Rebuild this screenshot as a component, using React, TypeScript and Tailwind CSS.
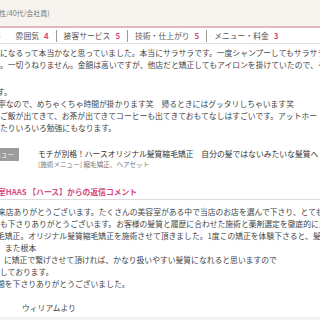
type RatingProps = {
  label: string;
  score: number;
};

function Rating({ label, score }: RatingProps) {
  return (
    <div className="flex items-center gap-[5px]">
      <span>{label}</span>
      <span className="font-bold text-[#d9457c]">{score}</span>
    </div>
  );
}

function Sep() {
  return <span className="block w-px h-[12px] bg-[#9a9a9a] mx-[7px]" />;
}

const review1 = [
  "になるって本当かなと思っていました。本当にサラサラです。一度シャンプーしてもサラサラ",
  "。一切うねりません。金額は高いですが、他店だと矯正してもアイロンを掛けていたので、そ",
];

const review2 = [
  { t: "す。", ml: "-ml-[3px]" },
  { t: "寧なので、めちゃくちゃ時間が掛かります笑　帰るときにはグッタリしちゃいます笑", ml: "-ml-[2px]" },
  { t: "ご飯が出てきて、お茶が出てきてコーヒーも出てきておもてなしはすごいです。アットホー", ml: "" },
  { t: "たりいろいろ勉強にもなります。", ml: "" },
];

const reply = [
  { t: "来店ありがとうございます。たくさんの美容室がある中で当店のお店を選んで下さり、とても", ml: "-ml-[2px]" },
  { t: "も下さりありがとうございます。お客様の髪質と履歴に合わせた施術と薬剤選定を徹底的に見", ml: "" },
  { t: "毛矯正。オリジナル髪質縮毛矯正を施術させて頂きました。1度この矯正を体験下さると、髪", ml: "-ml-[3px]" },
  { t: "また根本", ml: "ml-[5px]" },
  { t: "に矯正で繋げさせて頂ければ、かなり扱いやすい髪質になれると思いますので", ml: "ml-[4px]" },
  { t: "しております。", ml: "" },
  { t: "間を下さりありがとうございました。", ml: "-ml-[3px]" },
];

export default function App() {
  return (
    <div className="w-[320px] h-[320px] overflow-hidden bg-white text-[#444] font-['Noto_Sans_CJK_JP',sans-serif]">
      <div className="h-[26px] bg-[#f7f4ef] flex items-center text-[7px] text-[#777] whitespace-nowrap">
        <span className="-ml-[1px]">性/40代/会社員)</span>
      </div>
      <div className="h-[2px] bg-[#e5b6bf]" />

      <div className="h-[15px] flex items-center text-[7.8px] text-[#555] whitespace-nowrap">
        <span className="-ml-[4px] mr-[15px] font-bold text-[#d9457c]">5</span>
        <Rating label="雰囲気" score={4} />
        <Sep />
        <Rating label="接客サービス" score={5} />
        <Sep />
        <Rating label="技術・仕上がり" score={5} />
        <Sep />
        <Rating label="メニュー・料金" score={3} />
      </div>
      <div className="h-px bg-[#e2e2e2]" />

      <div className="pt-[3px] text-[7.8px] leading-[12px] whitespace-nowrap">
        {review1.map((line) => (
          <div key={line}>{line}</div>
        ))}
        <div className="mt-[15px]">
          {review2.map((line) => (
            <div key={line.t} className={line.ml}>
              {line.t}
            </div>
          ))}
        </div>
      </div>

      <div className="mt-[14px] flex items-start whitespace-nowrap">
        <div className="w-[19px] h-[13px] bg-[#9c9c9c] text-white text-[6.5px] flex items-center justify-end pr-[5px] overflow-hidden">
          <span>メニュー</span>
        </div>
        <div className="ml-[19px]">
          <div className="text-[7.8px] leading-[11px] text-[#333]">
            モチが別格！ハースオリジナル髪質縮毛矯正　自分の髪ではないみたいな髪質へ
          </div>
          <div className="text-[6.6px] leading-[10px] text-[#777]">
            [施術メニュー] 縮毛矯正、ヘアセット
          </div>
        </div>
      </div>

      <div className="mt-[17px] h-[13px] text-[7.8px] leading-[12px] font-bold text-[#d6487e] whitespace-nowrap">
        <span className="-ml-[2px]">室HAAS 【ハース】からの返信コメント</span>
      </div>
      <div className="h-px bg-[#dcdcdc]" />

      <div className="pt-[6px] text-[7.8px] leading-[12px] whitespace-nowrap">
        {reply.map((line) => (
          <div key={line.t} className={line.ml}>
            {line.t}
          </div>
        ))}
        <div className="mt-[12px] ml-[22px]">ウィリアムより</div>
      </div>
      <div className="mt-[3px] h-[4px] bg-[#f1f1f1]" />
    </div>
  );
}
